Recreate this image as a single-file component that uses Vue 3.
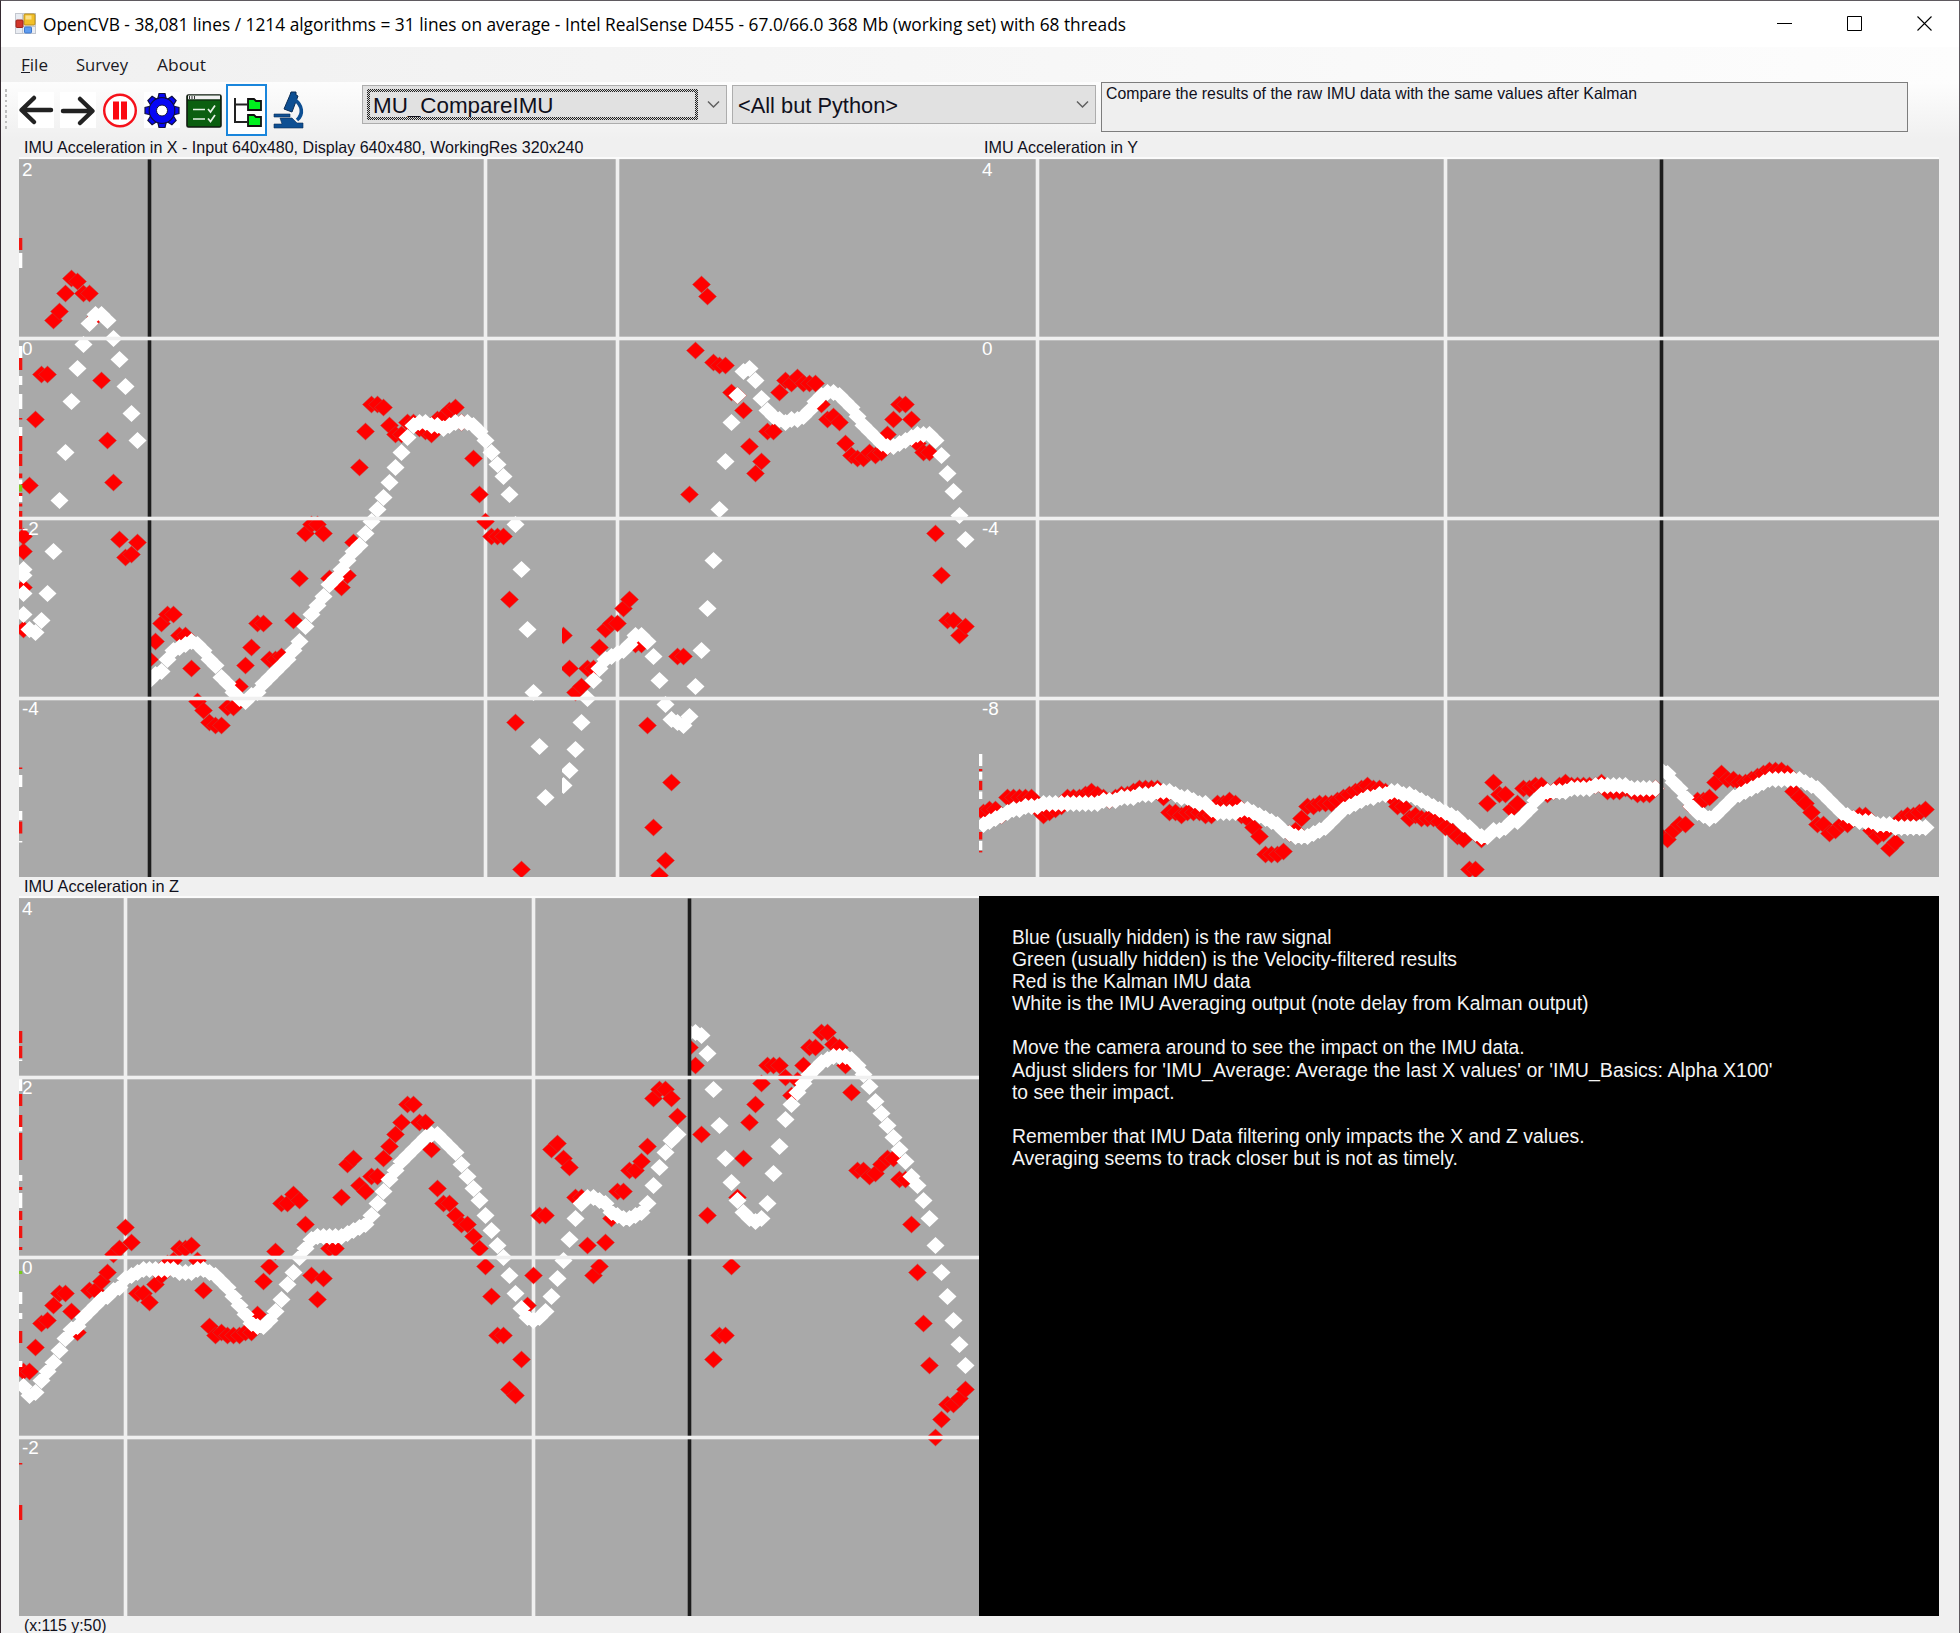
<script setup>
import { h } from 'vue'

// Single line of text fitted to a known advance width
const FitText = (props) =>
  h('svg', { width: props.w, height: props.lh, class: 'fit', style: { display: 'block', overflow: 'visible', flex: 'none' } }, [
    h('text', { x: 0, y: props.base, textLength: props.w, lengthAdjust: 'spacingAndGlyphs', 'font-size': props.size, fill: 'currentColor' }, props.t),
  ])
FitText.props = ['t', 'w', 'size', 'lh', 'base']

const grips = [0, 1, 2, 3, 4, 5, 6, 7]
const gearTeeth = [0, 45, 90, 135, 180, 225, 270, 315]

const plotX = {
  labels: ['2', '0', '-2', '-4'],
  white: [155, 199],
  cursor: 43,
  edge: [[27, 31, 'r'], [32, 37, 'w'], [63, 67, 'w'], [67, 71, 'r'], [73, 76, 'w'], [79, 84, 'w'], [87, 87.5, 'r'], [90, 93, 'w'], [93, 98, 'r'], [99, 103, 'r'], [105.5, 107, 'r'], [107.5, 109, 'w'], [109.3, 111.5, 'g'], [112, 113, 'r'], [113, 115, 'w'], [115.5, 116.5, 'r'], [118, 124, 'r'], [203.5, 204, 'r'], [206, 210, 'w'], [218, 221, 'w'], [221.5, 225.5, 'r'], [228, 228.5, 'w']],
  runs: [
    { start: 0, clip: 0,
      red: [126, 109, 87, 72, 72, 54, 51, 45, 40, 41, 45, 45, 53, 74, 94, 108, 127, 133, 132, 128],
      white: [152, 157, 158, 154, 145, 131, 114, 98, 81, 70, 62, 55, 52, 52, 54, 60, 67, 76, 85, 94],
      extra: [[0, 131, 'r'], [0, 157, 'r'], [0, 143, 'r'], [0, 137, 'w'], [0, 139, 'w'], [0, 145, 'w']] },
    { start: 21, clip: 44,
      red: [167, 161, 155, 152, 152, 159, 159, 170, 181, 184, 188, 189, 189, 183, 183, 176, 169, 163, 155, 155, 167, 167, 166, null, 154, 140, 125, 122, 122, 125, 140, 140, 143, 139, 128, 103, 91, 82, 82, 83, 89, 92, 92, 88, 88, 90, 91, 92, 87, 86, 84, 83, 88, null, 100, 112, 121, 126, 126, 126, 147, 188, 237],
      white: [174, 172, 171, 167, 164, 163, 162, 161, 162, 164, 167, 169, 173, 175, 178, 180, 181, 179, 178, 175, 173, 171, 169, 167, 164, 161, 156, 152, 149, 146, 142, 140, 137, 134, 131, 129, 125, 121, 117, 113, 108, 103, 98, 93, 89, 88, 88, 89, 89, 90, 89, 88, 88, 88, 89, 91, 94, 98, 102, 106, 112, 122, 137, 157, 178, 196, 213] },
    { start: 90, clip: 181,
      red: [159, 170, 178, 176, 170, 170, 163, 157, 155, 155, 150, 147, 162, 162, 189, 223, 239, 234, 208, 166, 166, 112, 64, 42, 46, 68, 69, 69, 78, 79, 84, 96, 105, 101, 91, 91, 78, 74, 75, 73, 75, 75, 75, 82, 87, 86, 88, 95, 99, 100, 100, 98, 99, 98, 92, 87, 82, 82, 87, 95, 98, 98, 125, 139, 154, 154, 159, 156],
      white: [209, 204, 197, 188, 180, 174, 170, 167, 166, 165, 164, 162, 159, 159, 161, 166, 174, 182, 187, 188, 189, 186, 176, 164, 150, 134, 117, 101, 88, 79, 71, 70, 74, 80, 84, 86, 87, 88, 87, 87, 86, 84, 81, 79, 78, 78, 79, 81, 83, 86, 89, 91, 93, 95, 96, 96, 95, 94, 93, 92, 92, 92, 94, 99, 105, 111, 119, 127] },
  ],
}

const plotY = {
  labels: ['4', '0', '-4', '-8'],
  white: [19, 155],
  cursor: 227,
  edge: [[199, 203, 'w'], [204, 204.7, 'r'], [205, 207.5, 'w'], [208, 211, 'r'], [211.5, 214, 'w'], [225, 227.5, 'r'], [228, 231, 'w'], [231.3, 231.8, 'r']],
  runs: [
    { start: 0, clip: 0,
      red: [218, 217, 217, 219, 213, 213, 213, 213, 213, 217, 219, 218, 217, 216, 213, 213, 213, 212, 211, 212, 213, 214, 213, 212, 212, 211, 210, 210, 210, 210, 213, 218, 218, 219, 218, 218, 218, 219, 219, 215, 215, 214, 215, 219, 220, 223, 226, 232, 232, 232, 231, 225, 224, 220, 216, 216, 215, 215, 215, 214, 213, 212, 211, 210, 209, 210, 210, 211, 213, 216, 216, 220, 219, 220, 220, 220, 221, 223, 224, 226, 227, 237, 237, 227, 215, 208, 212, 212, 217, 215, 210, 210, 209, 209, 212, 211, 209, 208, 209, 209, 209, 209, 209, 208, 211, 211, 211, 210, 211, 212, 212, 212, 210],
      white: [222, 221, 220, 219, 218, 217, 217, 216, 216, 216, 215, 215, 215, 215, 215, 215, 215, 215, 215, 215, 214, 214, 214, 213, 213, 213, 212, 212, 212, 211, 211, 211, 212, 213, 213, 214, 215, 215, 217, 218, 218, 218, 218, 217, 217, 218, 219, 220, 221, 222, 224, 225, 226, 226, 226, 225, 224, 223, 221, 219, 217, 216, 215, 214, 213, 213, 212, 212, 211, 211, 212, 212, 213, 214, 215, 216, 217, 218, 219, 220, 222, 223, 225, 226, 226, 224, 224, 223, 221, 221, 219, 217, 214, 212, 211, 211, 211, 211, 210, 210, 210, 210, 209, 209, 209, 209, 209, 209, 210, 210, 210, 210, 210] },
    { start: 113, clip: 228,
      red: [226, 227, 224, 222, 222, 216, 214, 214, 213, 208, 205, 207, 207, 208, 208, 207, 206, 205, 204, 204, 204, 205, 211, 213, 215, 218, 222, 222, 225, 224, 222, 222, 220, 219, 219, 224, 226, 225, 230, 228, 220, 219, 219, 218, 217],
      white: [204, 205, 208, 210, 213, 216, 218, 219, 220, 219, 217, 215, 213, 212, 211, 210, 209, 208, 207, 207, 207, 207, 207, 207, 208, 209, 210, 212, 214, 216, 218, 219, 220, 221, 221, 221, 222, 222, 222, 223, 223, 223, 223, 223, 223] },
  ],
}

const plotZ = {
  labels: ['4', '2', '0', '-2'],
  white: [35, 171],
  cursor: 223,
  edge: [[45, 49, 'r'], [50, 54, 'r'], [54.5, 55, 'w'], [60, 65, 'w'], [66, 70, 'r'], [73, 77, 'r'], [77, 78.5, 'w'], [79, 88, 'r'], [93, 95, 'w'], [97, 98, 'r'], [99, 104, 'w'], [105, 108, 'r'], [110, 114, 'r'], [117, 118, 'r'], [125, 126, 'g'], [132, 136, 'w'], [139, 141, 'w'], [145, 149, 'r'], [155, 157, 'w'], [189, 189.5, 'r'], [203, 208, 'r']],
  runs: [
    { start: 0, clip: 0,
      red: [158, 158, 150, 142, 141, 136, 132, 132, 138, 145, null, 131, 131, 128, 125, 119, 117, 110, 115, 132, 132, 135, 129, 126, 122, 121, 117, 117, 116, 121, 131, 143, 146, 145, 146, 146, 146, 145, 145, 139, 128, 123, 118, 102, 102, 99, 101, 109, 126, 134, 127, 117, 117, 100, 89, 87, 96, 98, 93, 93, 87, 83, 79, 75, 69, 69, 75, 75, 84, 97, 102, 102, 106, 109, 109, 113, 117, 123, 133, 146, 146, 164, 166, 154, 136, 126, 106, 106, 84, 82, 87, 90, 100, 100, 116, 126, 123, 115, 107, 98, 98, 91, 91, 88, 83, 67, 64, 64, 67, 73],
      white: [163, 166, 165, 161, 158, 155, 151, 147, 144, 143, 140, 138, 136, 134, 133, 131, 130, 127, 126, 125, 124, 124, 124, 124, 124, 124, 125, 125, 125, 124, 124, 125, 126, 128, 130, 133, 136, 139, 142, 143, 143, 141, 138, 134, 129, 125, 120, 117, 114, 113, 113, 113, 113, 113, 112, 111, 110, 109, 106, 102, 98, 94, 91, 88, 86, 84, 82, 80, 79, 79, 81, 83, 85, 89, 93, 97, 101, 106, 111, 116, 120, 126, 132, 137, 140, 141, 140, 138, 133, 127, 121, 114, 107, 102, 100, 100, 101, 102, 105, 106, 107, 107, 106, 105, 102, 96, 90, 85, 81, 79] },
    { start: 111, clip: 224,
      red: [50, 56, 79, 106, 154, 146, 146, 123, 100, 87, 75, 69, 62, 56, 56, 56, 60, 66, 61, 56, 50, 50, 45, 45, 49, 50, 56, 65, 91, 91, 93, 92, 89, 87, 87, 94, 94, 109, 125, 142, 156, 180, 174, 169, 169, 167, 164],
      white: [45, 45, 46, 52, 64, 76, 87, 95, 101, 105, 107, 108, 107, 102, 92, 83, 74, 69, 65, 62, 59, 57, 55, 54, 53, 53, 53, 54, 56, 59, 63, 68, 72, 76, 80, 84, 88, 93, 96, 101, 107, 116, 125, 133, 141, 149, 156] },
  ],
}

const diamond = (k, y) => `M${2 * k + 1.5} ${(y - 2.3).toFixed(1)}l3 2.8l-3 2.8l-3-2.8z`
const marks = (run, key) => run[key].map((y, i) => (y === null ? null : diamond(run.start + i, y))).filter(Boolean)
const extras = (run, c) => (run.extra || []).filter((e) => e[2] === c).map((e) => diamond(e[0], e[1]))
const edgeColor = { r: '#f01410', w: '#ffffff', g: '#7ac81e' }

const plots = [
  { id: 'x', title: 'IMU Acceleration in X - Input 640x480, Display 640x480, WorkingRes 320x240', w: 559.5, data: plotX },
  { id: 'y', title: 'IMU Acceleration in Y', w: 154, data: plotY },
  { id: 'z', title: 'IMU Acceleration in Z', w: 155, data: plotZ },
]

const notes = [
  ['Blue (usually hidden) is the raw signal', 319.5],
  ['Green (usually hidden) is the Velocity-filtered results', 445],
  ['Red is the Kalman IMU data', 238.5],
  ['White is the IMU Averaging output (note delay from Kalman output)', 576.6],
  ['', 0],
  ['Move the camera around to see the impact on the IMU data.', 512.6],
  ["Adjust sliders for 'IMU_Average: Average the last X values' or 'IMU_Basics: Alpha X100'", 760.5],
  ['to see their impact.', 162.5],
  ['', 0],
  ['Remember that IMU Data filtering only impacts the X and Z values.', 572.5],
  ['Averaging seems to track closer but is not as timely.', 446],
]
</script>

<template>
  <div class="window">
    <header class="titlebar">
      <svg class="appicon" width="21" height="21" viewBox="0 0 21 21">
        <rect x="0.5" y="0.5" width="20" height="20" fill="#e9ecf2" stroke="#c3c7cf" />
        <path d="M7.5 1v19M1 13.5h19" stroke="#c3c7cf" />
        <rect x="9" y="1" width="11" height="11" rx="1" fill="#f2c029" stroke="#b98d1c" />
        <rect x="10.5" y="2.5" width="6" height="4" fill="#fbe08a" />
        <rect x="1" y="7" width="7" height="7.5" rx="1" fill="#d2362b" stroke="#9c241c" />
        <rect x="9.5" y="14" width="7" height="6" rx="1" fill="#5e9cf0" stroke="#3f78cc" />
      </svg>
      <FitText class="seg" t="OpenCVB - 38,081 lines / 1214 algorithms = 31 lines on average - Intel RealSense D455 - 67.0/66.0 368 Mb (working set) with 68 threads" :w="1083" :size="17.5" :lh="46" :base="30" />
      <div class="winbtns">
        <svg width="16" height="16" viewBox="0 0 16 16"><path d="M0 7.5h15" stroke="#000" /></svg>
        <svg width="16" height="16" viewBox="0 0 16 16"><path d="M.5.5h14v14h-14z" fill="none" stroke="#000" /></svg>
        <svg width="16" height="16" viewBox="0 0 16 16"><path d="M.5.5l14 14M14.500.5l-14 14" stroke="#000" stroke-width="1.1" /></svg>
      </div>
    </header>

    <nav class="menu seg">
      <div class="file"><FitText t="File" :w="27" :size="16.5" :lh="35" :base="23.5" /></div>
      <FitText t="Survey" :w="52" :size="16.5" :lh="35" :base="23.5" />
      <FitText t="About" :w="49" :size="16.5" :lh="35" :base="23.5" />
    </nav>

    <div class="toolbar">
      <div class="grip"><i v-for="g in grips" :key="g"></i></div>
      <div class="icons">
        <svg class="ic" width="36" height="36" viewBox="0 0 36 36"><rect width="36" height="36" fill="#fff" /><path d="M33 18H5M16 6L3.500 18L16 30" fill="none" stroke="#222" stroke-width="4.500" stroke-linecap="round" stroke-linejoin="round" /></svg>
        <svg class="ic" width="36" height="36" viewBox="0 0 36 36"><rect width="36" height="36" fill="#fff" /><path d="M3 19H31M20 7L32.500 19L20 31" fill="none" stroke="#222" stroke-width="4.500" stroke-linecap="round" stroke-linejoin="round" /></svg>
        <svg class="ic" width="36" height="36" viewBox="0 0 36 36"><circle cx="18" cy="18.500" r="15.800" fill="#fff" stroke="#f5111a" stroke-width="2.400" /><path d="M11 9.500h6v18h-6zM19 9.500h6v18h-6z" fill="#fb0a12" /></svg>
        <svg class="ic" width="36" height="36" viewBox="0 0 36 36">
          <rect width="36" height="36" fill="#fff" />
          <g fill="#0606f5" stroke="#101040" stroke-width="1.200">
            <path v-for="a in gearTeeth" :key="a" :transform="`rotate(${a} 18 18.500)`" d="M13.500 8L15 1.500h6L22.500 8z" />
            <circle cx="18" cy="18.500" r="12.800" />
          </g>
          <circle cx="18" cy="18.500" r="12" fill="#0606f5" />
          <circle cx="18" cy="18.500" r="5.500" fill="#fff" stroke="#101040" stroke-width="1" />
        </svg>
        <svg class="ic" width="36" height="36" viewBox="0 0 36 36">
          <rect x="1" y="3" width="34" height="32" rx="1.500" fill="#0b5f10" stroke="#111a10" stroke-width="1.600" />
          <path d="M2 3.500h32v4H2z" fill="#f2f2f2" /><path d="M1 8h34" stroke="#111a10" />
          <path d="M3.500 4v3M6 4v3M8.500 4v3" stroke="#333" />
          <path d="M7 17.500h12M7 27h12M22 17l2.500 3L29 13.500M22 26.500l2.500 3L29 23" fill="none" stroke="#e6f2e6" stroke-width="1.700" />
        </svg>
        <span class="selected">
          <svg width="29" height="32" viewBox="0 0 29 32">
            <path d="M1 1v24h12M1 7.500h12" fill="none" stroke="#222" stroke-width="2" />
            <path d="M14 2h6l2 2h5v9H14zM14 18h6l2 2h5v9H14z" fill="#00f01e" stroke="#111" stroke-width="1.800" />
          </svg>
        </span>
        <svg class="ic" width="36" height="38" viewBox="0 0 36 38">
          <path d="M20 1h5v3l2 1l-6 16l-8-3l6-14z" fill="#0d4f93" stroke="#0a2c55" />
          <path d="M24 9c7 5 9 14 2 20" fill="none" stroke="#0d4f93" stroke-width="3.600" />
          <path d="M3 23h16v3H3zM9 27h12l5 5h6v5H3v-4h8z" fill="#0d4f93" stroke="#0a2c55" stroke-width=".6" />
        </svg>
      </div>
      <div class="combo focus">
        <div class="value"><FitText t="MU_CompareIMU" :w="180.500" :size="21.500" :lh="37" :base="27" /></div>
        <svg class="chev" width="13" height="9" viewBox="0 0 13 9"><path d="M1 1.500l5.500 5.500l5.500-5.500" fill="none" stroke="#606060" stroke-width="1.500" /></svg>
      </div>
      <div class="combo second">
        <div class="value"><FitText t="&lt;All but Python&gt;" :w="160" :size="21.500" :lh="37" :base="27" /></div>
        <svg class="chev" width="13" height="9" viewBox="0 0 13 9"><path d="M1 1.500l5.500 5.500l5.500-5.500" fill="none" stroke="#606060" stroke-width="1.500" /></svg>
      </div>
      <div class="desc"><FitText t="Compare the results of the raw IMU data with the same values after Kalman" :w="531" :size="16.500" :lh="20" :base="16" /></div>
    </div>

    <main class="views">
      <section v-for="p in plots" :key="p.id" class="view" :class="p.id">
        <h2><FitText :t="p.title" :w="p.w" :size="16.500" :lh="17" :base="13.500" /></h2>
        <svg class="plot" width="960" height="720" viewBox="0 0 320 240">
          <rect width="320" height="240" fill="#a9a9a9" />
          <rect v-for="x in p.data.white" :key="'v' + x" :x="x - 0.1" y="0" width="1.200" height="240" fill="#f0f0f0" />
          <svg v-for="r in p.data.runs" :key="r.start" :x="r.clip" y="0" :width="320 - r.clip" height="240" :viewBox="`${r.clip} 0 ${320 - r.clip} 240`">
            <g fill="#ff0000" stroke="#b84a42" stroke-opacity=".5" stroke-width=".3">
              <path v-for="(d, i) in extras(r, 'r')" :key="'e' + i" :d="d" />
              <path v-for="(d, i) in marks(r, 'red')" :key="i" :d="d" />
            </g>
            <path :d="marks(r, 'white').concat(extras(r, 'w')).join('')" fill="#fff" />
          </svg>
          <rect v-for="(e, i) in p.data.edge" :key="'s' + i" x="0" :y="e[0]" width="1.100" :height="e[1] - e[0]" :fill="edgeColor[e[2]]" />
          <rect :x="p.data.cursor - 0.1" y="0.8" width="1.200" height="239.200" fill="#1c1c1c" />
          <rect width="320" height="0.7" fill="#fbfbfb" />
          <rect v-for="y in [60, 120, 180]" :key="'h' + y" x="0" :y="y - 0.1" width="320" height="1.200" fill="#f0f0f0" />
          <text v-for="(l, i) in p.data.labels" :key="'l' + i" x="1" :y="6.200 + i * 59.900" font-size="6.300" fill="#fff">{{ l }}</text>
        </svg>
      </section>
      <section class="view info">
        <div class="notes">
          <FitText v-for="(n, i) in notes" :key="i" :t="n[0]" :w="n[1]" :size="19.600" :lh="22.100" :base="18" />
        </div>
      </section>
    </main>
    <footer><FitText t="(x:115 y:50)" :w="82.500" :size="16.500" :lh="15" :base="14.500" /></footer>
  </div>
</template>

<style>
html, body { margin: 0; background: #f0f0f0; overflow: hidden; }
</style>

<style scoped>
.window { box-sizing: border-box; width: 1960px; height: 1633px; display: flex; flex-direction: column; background: #f0f0f0; border: 1px solid #5f5a60; border-bottom: 0; border-left-color: #33282f; overflow: hidden; font-family: "Liberation Sans", Arial, sans-serif; color: #10101c; }
.seg { font-family: "Open Sans", "Noto Sans", sans-serif; }
.titlebar { height: 46px; flex: none; display: flex; align-items: center; background: #fff; color: #000; padding-left: 14px; }
.appicon { flex: none; margin-right: 7px; margin-top: -2px; }
.winbtns { display: flex; gap: 54px; margin-left: auto; padding-right: 26px; }
.winbtns svg { width: 16px; height: 16px; }
.menu { height: 35px; flex: none; display: flex; gap: 28.500px; padding-left: 19.500px; background: linear-gradient(90deg, #f0f0f0, #fdfdfd); color: #1a1a24; }
.file { position: relative; }
.file::after { content: ""; position: absolute; left: 0; top: 25px; width: 9px; height: 1px; background: #1a1a24; }
.toolbar { height: 57px; flex: none; display: flex; align-items: flex-start; background: linear-gradient(#fdfdfd, #f0f0f0); }
.grip { width: 3px; margin: 7px 0 0 4px; display: flex; flex-direction: column; gap: 2.800px; }
.grip i { width: 2px; height: 2.500px; background: #bdbdbd; }
.icons { width: 288px; margin-left: 10px; display: flex; gap: 6px; padding-top: 3px; flex: none; }
.icons .ic { margin-top: 7px; flex: none; }
.icons svg:last-child { margin-top: 6px; }
.selected { box-sizing: border-box; width: 41px; height: 52px; margin: -1px -2px 0 -2px; flex: none; border: 2px solid #1a86dc; background: #fff; display: flex; align-items: center; justify-content: center; }
.selected svg { margin-left: 3px; }
.combo { box-sizing: border-box; width: 365px; height: 39px; flex: none; margin: 3px 0 0 56px; background: #e1e1e1; border: 1px solid #adadad; display: flex; justify-content: space-between; align-items: center; padding-right: 6px; }
.combo.second { margin-left: 5px; width: 364px; }
.combo .value { padding-left: 5px; height: 37px; }
.combo.focus .value { position: relative; padding-left: 10px; width: 321px; }
.combo.focus .value::after { content: ""; position: absolute; left: 4px; top: 3px; right: -4px; bottom: 3px; border: 3px solid transparent; background: repeating-conic-gradient(#202020 0 25%, #d8d8d8 0 50%) 0 0 / 2px 2px border-box; -webkit-mask: linear-gradient(#000 0 0) padding-box, linear-gradient(#000 0 0); -webkit-mask-composite: xor; mask-composite: exclude; }
.desc { box-sizing: border-box; width: 807px; height: 50px; flex: none; margin: 0 0 0 5px; border: 1.500px solid #7d7d7d; background: #efefef; padding-left: 4px; }
.views { width: 1920px; height: 1477px; margin-left: 18px; display: grid; grid-template-columns: 960px 960px; grid-template-rows: 738px 739px; flex: none; }
.view { display: flex; flex-direction: column; justify-content: flex-end; }
.view h2 { margin: 0 0 0 4.500px; height: 18px; font: inherit; }
.plot { display: block; flex: none; }
.info .notes { box-sizing: border-box; height: 720px; background: #000; color: #f4f4f4; padding: 30px 0 0 33px; }
footer { height: 15px; margin-left: 22.500px; flex: none; }
</style>
